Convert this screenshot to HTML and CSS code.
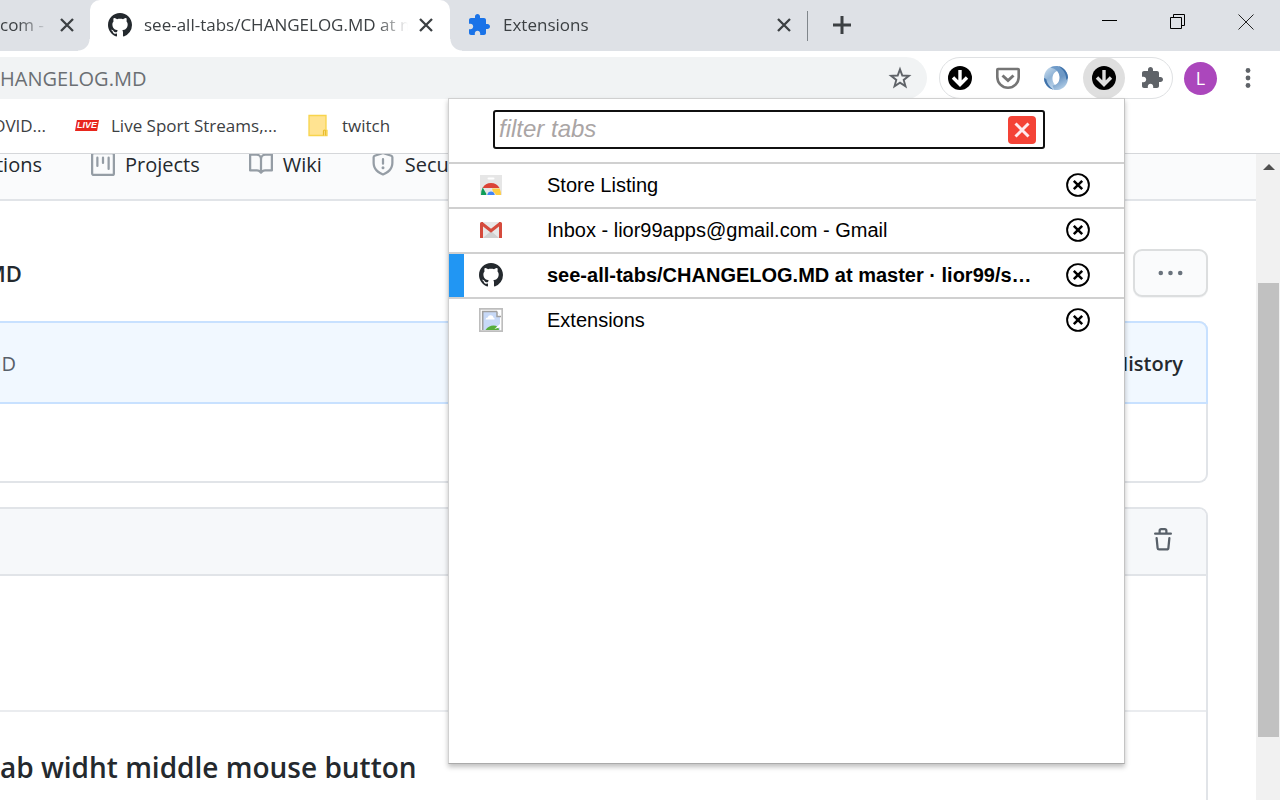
FILE: index.html
```html
<!DOCTYPE html>
<html lang="en">
<head>
<meta charset="utf-8">
<title>see-all-tabs/CHANGELOG.MD</title>
<link rel="stylesheet" href="styles.css">
</head>
<body>
<svg class="defs" aria-hidden="true">
  <symbol id="github" viewBox="0 0 16 16"><path d="M8 0C3.58 0 0 3.58 0 8c0 3.54 2.29 6.53 5.47 7.59.4.07.55-.17.55-.38 0-.19-.01-.82-.01-1.49-2.01.37-2.53-.49-2.69-.94-.09-.23-.48-.94-.82-1.13-.28-.15-.68-.52-.01-.53.63-.01 1.08.58 1.23.82.72 1.21 1.87.87 2.33.66.07-.52.28-.87.51-1.07-1.78-.2-3.64-.89-3.64-3.95 0-.87.31-1.59.82-2.15-.08-.2-.36-1.02.08-2.12 0 0 .67-.21 2.2.82.64-.18 1.32-.27 2-.27.68 0 1.36.09 2 .27 1.53-1.04 2.2-.82 2.2-.82.44 1.1.16 1.92.08 2.12.51.56.82 1.27.82 2.15 0 3.07-1.87 3.75-3.65 3.95.29.25.54.73.54 1.48 0 1.07-.01 1.93-.01 2.2 0 .21.15.46.55.38A8.013 8.013 0 0016 8c0-4.42-3.58-8-8-8z"/></symbol>
  <symbol id="puzzle" viewBox="0 0 24 24"><path d="M20.5 11H19V7c0-1.1-.9-2-2-2h-4V3.5C13 2.12 11.88 1 10.5 1S8 2.12 8 3.500V5H4c-1.100 0-1.990.9-1.990 2v3.800H3.500c1.490 0 2.700 1.210 2.700 2.700s-1.210 2.700-2.700 2.700H2V20c0 1.100.9 2 2 2h3.800v-1.500c0-1.490 1.210-2.700 2.700-2.700s2.700 1.210 2.700 2.700V22H17c1.100 0 2-.9 2-2v-4h1.500c1.380 0 2.500-1.120 2.500-2.500S21.880 11 20.500 11z"/></symbol>
  <symbol id="cross" viewBox="0 0 24 24"><path d="M6 6l12 12M18 6L6 18" stroke="currentColor" stroke-width="2.300" fill="none"/></symbol>
  <symbol id="down" viewBox="0 0 24 24"><circle cx="12" cy="12" r="12" fill="#000"/><path d="M12 4v14M5 11.500l7 7 7-7" stroke="currentColor" stroke-width="3.400" fill="none"/></symbol>
  <symbol id="round-x" viewBox="0 0 24 24"><circle cx="12" cy="12" r="10.900" fill="none" stroke="#000" stroke-width="1.900"/><path d="M7.800 7.800l8.400 8.400M16.200 7.800l-8.400 8.400" stroke="#000" stroke-width="2.500" fill="none"/></symbol>
</svg>

<header class="browser">
  <div class="strip">
    <div class="tab tab-first"><span class="tab-title">com - G</span><button class="tab-close" aria-label="Close tab"><svg><use href="#cross"/></svg></button></div>
    <div class="tab tab-active"><svg class="favicon mark"><use href="#github"/></svg><span class="tab-title">see-all-tabs/CHANGELOG.MD at master</span><button class="tab-close" aria-label="Close tab"><svg><use href="#cross"/></svg></button></div>
    <div class="tab tab-last"><svg class="favicon blue"><use href="#puzzle"/></svg><span class="tab-title">Extensions</span><button class="tab-close" aria-label="Close tab"><svg><use href="#cross"/></svg></button></div>
    <button class="new-tab" aria-label="New tab"><svg viewBox="0 0 24 24"><path d="M12 3v18M3 12h18" stroke="#3c4043" stroke-width="3" fill="none"/></svg></button>
    <div class="window-buttons">
      <button aria-label="Minimize"><svg viewBox="0 0 16 16"><path d="M0 6.500h15" stroke="#000" fill="none"/></svg></button>
      <button aria-label="Restore"><svg viewBox="0 0 16 16"><path d="M.5 3.500h11v11H.5zM3.500 3.500v-3h11v11h-3" stroke="#000" fill="none"/></svg></button>
      <button aria-label="Close"><svg viewBox="0 0 16 16"><path d="M.5.5l15 15M15.500.5l-15 15" stroke="#222" fill="none"/></svg></button>
    </div>
  </div>

  <div class="toolbar">
    <div class="omnibox"><span class="url">HANGELOG.MD</span>
      <button class="icon-button" aria-label="Bookmark this page"><svg viewBox="0 0 24 24"><path d="M12 3.300l2.300 6.200 6.600.3-5.200 4.100 1.800 6.400-5.500-3.700-5.500 3.700 1.800-6.400-5.200-4.100 6.600-.3z" fill="none" stroke="#5f6368" stroke-width="1.900"/></svg></button>
    </div>
    <div class="extensions">
      <button class="icon-button on-white" aria-label="See all tabs"><svg><use href="#down"/></svg></button>
      <button class="icon-button" aria-label="Pocket"><svg viewBox="0 0 24 24"><path d="M2 3h20a.7.7 0 01.7.7V11a10.700 10.700 0 01-21.400 0V3.700A.7.7 0 012 3z" fill="none" stroke="#757575" stroke-width="2.600"/><path d="M6.500 9.500l5.500 5 5.500-5" fill="none" stroke="#757575" stroke-width="3"/></svg></button>
      <button class="icon-button" aria-label="Swirl"><svg viewBox="0 0 24 24">
        <defs><linearGradient id="sw-left" x1="0" y1="0" x2=".6" y2="1"><stop offset="0" stop-color="#d3e3f1"/><stop offset=".5" stop-color="#8fb3d6"/><stop offset="1" stop-color="#c6dcf0"/></linearGradient><linearGradient id="sw-right" x1=".3" y1="0" x2=".7" y2="1"><stop offset="0" stop-color="#6e9ac8"/><stop offset=".5" stop-color="#6c97c4"/><stop offset="1" stop-color="#b9d3ea"/></linearGradient></defs>
        <path fill="url(#sw-left)" d="M14 .3C6.500-1.500 0 4.500 0 12c0 5.500 4 10.500 9.500 11.700 3 .3 6-.2 8.500-2.200-5 .5-9.500-3.500-9.500-9C8.500 8 11 5 15.500 4.500z"/>
        <path fill="url(#sw-right)" d="M10 23.700C17.500 25.500 24 19.500 24 12 24 6.500 20 1.500 14.500.3 11-.3 8.500.5 6.500 2 11 1.500 15.500 6 15.500 11.500c0 4.500-2.500 7.500-7 8z"/>
        <path fill="#3f72aa" d="M14.500.3C20 1.500 24 6.500 24 12l-1.800 2C22.500 8.500 19.500 3.500 14.500.3zM0 12c0 5.500 4 10.500 9.500 11.700C5.500 21 3 17.500 2.200 13z"/>
        <path fill="#fff" d="M12.500 6c2 1.500 3 3.500 2.500 6.500s-1.500 4.500-3.500 5.500C9.500 16 8.500 14 9 11.500s1.500-4 3.500-5.500z"/></svg></button>
      <button class="icon-button pressed" aria-label="See all tabs, open"><svg><use href="#down"/></svg></button>
      <button class="icon-button grey" aria-label="Extensions"><svg><use href="#puzzle"/></svg></button>
    </div>
    <button class="avatar">L</button>
    <button class="icon-button" aria-label="Menu"><svg viewBox="0 0 24 24" fill="#5f6368"><circle cx="12" cy="4.500" r="2.400"/><circle cx="12" cy="12" r="2.400"/><circle cx="12" cy="19.500" r="2.400"/></svg></button>
  </div>

  <nav class="bookmarks" aria-label="Bookmarks">
    <a href="#" class="bookmark cut">OVID...</a>
    <a href="#" class="bookmark live-link"><span class="live">LIVE</span>Live Sport Streams,...</a>
    <a href="#" class="bookmark folder-link"><svg class="folder" viewBox="0 0 20 24"><path d="M1 1.500h17v15h1v5H1z" fill="#ffe391" stroke="#f8d44c" stroke-width="1.300"/><path d="M15.500 21.500v-4.500q0-1 1-1t1 1v4.500" fill="#ffe391" stroke="#e9bd2e" stroke-width="1.200"/></svg>twitch</a>
  </nav>
</header>

<div class="viewport">
  <div class="page">
    <nav class="repo-nav" aria-label="Repository">
      <a href="#" class="cut">tions</a>
      <a href="#"><svg viewBox="0 0 16 16"><path fill-rule="evenodd" d="M1.750 0A1.750 1.750 0 000 1.750v12.500C0 15.216.784 16 1.750 16h12.500A1.750 1.750 0 0016 14.250V1.750A1.750 1.750 0 0014.250 0H1.750zM1.500 1.750a.25.25 0 01.25-.25h12.500a.25.25 0 01.25.25v12.500a.25.25 0 01-.25.25H1.750a.25.25 0 01-.25-.25V1.750zM11.750 3a.75.75 0 00-.75.75v7.500a.75.75 0 001.500 0v-7.500a.75.75 0 00-.75-.75zm-8.250.75a.75.75 0 011.500 0v5.500a.75.75 0 01-1.500 0v-5.500zM8 3a.75.75 0 00-.75.75v3.500a.75.75 0 001.500 0v-3.500A.75.75 0 008 3z"/></svg>Projects</a>
      <a href="#"><svg viewBox="0 0 16 16"><path fill-rule="evenodd" d="M0 1.750A.75.75 0 01.75 1h4.253c1.227 0 2.317.59 3 1.501A3.744 3.744 0 0111.006 1h4.245a.75.75 0 01.75.75v10.500a.75.75 0 01-.75.75h-4.507a2.250 2.250 0 00-1.591.659l-.622.621a.75.75 0 01-1.060 0l-.622-.621A2.250 2.250 0 005.258 13H.75a.75.75 0 01-.75-.75V1.750zm8.755 3a2.250 2.250 0 012.250-2.250H14.500v9h-3.757c-.71 0-1.400.201-1.992.572l.004-7.322zm-1.504 7.324l.004-5.073-.002-2.253A2.250 2.250 0 005.003 2.500H1.500v9h3.757a3.750 3.750 0 011.994.574z"/></svg>Wiki</a>
      <a href="#"><svg viewBox="0 0 16 16"><path fill-rule="evenodd" d="M7.467.133a1.750 1.750 0 011.066 0l5.250 1.680A1.750 1.750 0 0115 3.480V7c0 1.566-.32 3.182-1.303 4.682-.983 1.498-2.585 2.813-5.032 3.855a1.700 1.700 0 01-1.330 0c-2.447-1.042-4.049-2.357-5.032-3.855C1.320 10.182 1 8.566 1 7V3.480a1.750 1.750 0 011.217-1.667l5.250-1.680zm.61 1.429a.25.25 0 00-.153 0l-5.250 1.680a.25.25 0 00-.174.238V7c0 1.358.275 2.666 1.057 3.860.784 1.194 2.121 2.340 4.366 3.297a.2.2 0 00.154 0c2.245-.956 3.582-2.104 4.366-3.298C13.225 9.666 13.500 8.360 13.500 7V3.480a.25.25 0 00-.174-.237l-5.250-1.680zM9 10.500a1 1 0 11-2 0 1 1 0 012 0zm-.25-5.750a.75.75 0 10-1.500 0v3a.75.75 0 001.500 0v-3z"/></svg>Secu</a>
    </nav>
    <main class="content">
      <div class="path-row"><strong class="path">MD</strong><button class="more" aria-label="More options"><svg viewBox="0 0 24 24" fill="#6a737d"><circle cx="2.300" cy="12" r="2.300"/><circle cx="12" cy="12" r="2.300"/><circle cx="21.700" cy="12" r="2.300"/></svg></button></div>
      <section class="box commit">
        <div class="commit-head"><span class="crumb">MD</span><a href="#" class="history">History</a></div>
      </section>
      <section class="box file">
        <div class="file-head"><button class="trash" aria-label="Delete this file"><svg viewBox="0 0 16 16" fill="#586069"><path fill-rule="evenodd" d="M6.500 1.750a.25.25 0 01.25-.25h2.500a.25.25 0 01.25.25V3h-3V1.750zm4.500 0V3h2.250a.75.75 0 010 1.500H2.750a.75.75 0 010-1.500H5V1.750C5 .784 5.784 0 6.750 0h2.500C10.216 0 11 .784 11 1.750zM4.496 6.675a.75.75 0 10-1.492.15l.66 6.600A1.750 1.750 0 005.405 15h5.190c.9 0 1.652-.681 1.741-1.576l.66-6.600a.75.75 0 00-1.492-.149l-.66 6.600a.25.25 0 01-.249.225h-5.190a.25.25 0 01-.249-.225l-.66-6.600z"/></svg></button></div>
        <div class="readme"><h2>ab widht middle mouse button</h2></div>
      </section>
    </main>
  </div>
  <div class="scrollbar" aria-hidden="true"><svg class="arrow" viewBox="0 0 12 6"><path d="M6 0l6 6H0z" fill="#505050"/></svg><div class="thumb"></div></div>
</div>

<aside class="popup">
  <form class="filter">
    <div class="field"><input type="text" placeholder="filter tabs" aria-label="filter tabs"><button type="button" class="clear" aria-label="Clear filter"><svg viewBox="0 0 28 28"><rect width="28" height="28" rx="4" fill="#f44336"/><path d="M7.500 7.500l13 13M20.500 7.500l-13 13" stroke="#ffebee" stroke-width="3"/></svg></button></div>
  </form>
  <ul class="tabs">
    <li><svg class="icon" viewBox="0 0 24 24"><path fill="#e6e6e6" d="M1 2h22v20H1z"/><rect x="8.500" y="4.500" width="7" height="2" rx="1" fill="#fff"/><path fill="#db4437" d="M3.500 15a9.800 9.800 0 0117 0h-9z"/><path fill="#0f9d58" d="M3.700 14.500L8 22H2q-.2-4 1.700-7.500z"/><path fill="#ffcd40" d="M13 15.500h7.700Q22 18.500 22 22h-7z"/><path fill="#f1f1f1" d="M7.200 22a5 5 0 019.600 0z"/><path fill="#4285f4" d="M8.200 22a3.900 4.500 0 017.600 0z"/></svg><span>Store Listing</span><button class="remove" aria-label="Close Store Listing"><svg><use href="#round-x"/></svg></button></li>
    <li><svg class="icon" viewBox="0 0 24 24"><path fill="#e8e8e8" d="M3 4h18v16H3z"/><path fill="#d0d0d0" d="M4 20l8-7 8 7z"/><path fill="#d54b3d" d="M1 20V5.500Q1 4 2.500 4H4v16zM20 20V4h1.500Q23 4 23 5.500V20z"/><path fill="none" stroke="#d54b3d" stroke-width="3" d="M2.500 5.300l9.500 7.500 9.500-7.500"/></svg><span>Inbox - lior99apps@gmail.com - Gmail</span><button class="remove" aria-label="Close Gmail"><svg><use href="#round-x"/></svg></button></li>
    <li class="current"><svg class="icon mark"><use href="#github"/></svg><span>see-all-tabs/CHANGELOG.MD at master · lior99/see-all-tabs</span><button class="remove" aria-label="Close see-all-tabs"><svg><use href="#round-x"/></svg></button></li>
    <li><svg class="icon" viewBox="0 0 24 24"><path d="M.8.800h22.400v22.400H.8z" fill="#fff" stroke="#bdbdbd" stroke-width="1.700"/><path d="M3.700 3.500h14.300l3 3.500v15H3.700z" fill="#c7d9f7"/><path d="M3.700 22V3.500H18" fill="none" stroke="#a0a0a0" stroke-width="1.600"/><path d="M18 3.500V8.500h4" fill="#fff" stroke="#a0a0a0" stroke-width="1.500"/><path d="M6.500 11.500q.2-2 2.200-2Q9.500 6.800 12 7.300t2.300 2.200q1.700.2 1.200 2z" fill="#fff"/><path d="M6.500 22q3-4.500 8-4.500T20 22z" fill="#55ad3c"/><path d="M15.500 21l6.500-6v4z" fill="#fff"/></svg><span>Extensions</span><button class="remove" aria-label="Close Extensions"><svg><use href="#round-x"/></svg></button></li>
  </ul>
</aside>
</body>
</html>
```
FILE: styles.css
```css
* { box-sizing: border-box; }

body {
  margin: 0;
  height: 100vh;
  display: flex;
  flex-direction: column;
  position: relative;
  overflow: hidden;
  background: #fff;
  color: #24292e;
  font-family: "Open Sans", "Noto Sans", sans-serif;
  font-size: 17px;
}

button {
  display: flex;
  align-items: center;
  justify-content: center;
  padding: 0;
  border: 0;
  background: none;
  font: inherit;
  flex: none;
}

a { color: inherit; text-decoration: none; }
svg { display: block; flex: none; }
.defs { position: absolute; width: 0; height: 0; }
.mark { fill: #24292e; }
.blue { fill: #1a73e8; }
.grey { fill: #5f6368; }

/* Tab strip */
.browser { flex: none; }
.strip { display: flex; height: 51px; background: #dee1e6; color: #3c4043; }
.tab { display: flex; align-items: center; height: 50px; position: relative; }
.tab-title {
  flex: 1;
  min-width: 0;
  padding-bottom: 2px;
  overflow: hidden;
  white-space: nowrap;
  mask-image: linear-gradient(to left, transparent, #000 32px);
}
.tab-first { width: 90px; padding-right: 11px; }
.tab-first .tab-title { margin-right: 6px; }
.tab-active { width: 360px; height: 51px; padding: 0 12px 1px 18px; gap: 12px; background: #fff; border-radius: 10px 10px 0 0; }
.tab-active .tab-title { margin-right: -6px; }
.tab-active::before,
.tab-active::after { content: ""; position: absolute; bottom: 0; width: 12px; height: 12px; }
.tab-active::before { right: 100%; background: radial-gradient(circle at 0 0, transparent 11px, #fff 12px); }
.tab-active::after { left: 100%; background: radial-gradient(circle at 100% 0, transparent 11px, #fff 12px); }
.tab-last { width: 358px; padding: 0 12px 0 17px; gap: 12px; }
.tab-last::after { content: ""; position: absolute; right: 0; top: 11px; width: 1px; height: 30px; background: #80868b; }
.favicon { width: 24px; height: 24px; }
.tab-close svg { width: 24px; height: 24px; color: #3c4043; }
.new-tab { width: 68px; height: 50px; }
.new-tab svg { width: 24px; height: 24px; }
.window-buttons { display: flex; margin-left: auto; }
.window-buttons button { width: 68px; height: 43px; }
.window-buttons svg { width: 16px; height: 16px; }

/* Toolbar */
.toolbar { display: flex; align-items: center; padding: 6px 20px 0 0; }
.omnibox {
  flex: 1;
  display: flex;
  align-items: center;
  justify-content: space-between;
  height: 42px;
  padding-right: 15px;
  border-radius: 0 21px 21px 0;
  background: #f1f3f4;
}
.url { color: #6b6f73; font-size: 20px; }
.icon-button svg { width: 24px; height: 24px; }
.extensions { display: flex; gap: 24px; margin: 0 11px 0 12px; padding: 8px; border: 1px solid #dfe1e3; border-radius: 21px; }
.on-white { color: #fff; }
.pressed { color: #dfdfdf; background: #dfdfdf; border-radius: 50%; box-shadow: 0 0 0 9px #dfdfdf; }
.avatar { width: 33px; height: 33px; margin-right: 19px; border-radius: 50%; background: #ab47bc; color: #fff; font-size: 18px; }

/* Bookmarks */
.bookmarks { display: flex; align-items: center; height: 55px; padding-bottom: 1px; border-bottom: 1px solid #d5d7da; color: #3c4043; }
.bookmark { display: flex; align-items: center; white-space: nowrap; }
.cut { justify-content: flex-end; overflow: hidden; }
.bookmark.cut { width: 46px; }
.live-link { width: 232px; padding-left: 29px; gap: 12px; }
.live {
  width: 24px;
  height: 11px;
  background: #e8261c;
  clip-path: polygon(8% 0, 100% 0, 92% 100%, 0 100%);
  color: #fff;
  font: italic bold 9px/11px "Liberation Sans", sans-serif;
  text-align: center;
}
.folder-link { padding-left: 30px; gap: 14px; }
.folder { width: 20px; height: 24px; }

/* Page */
.viewport { flex: 1; min-height: 0; display: flex; }
.page { flex: 1; min-width: 0; overflow: hidden; }
.repo-nav { display: flex; gap: 49px; height: 47px; overflow: hidden; background: #fafbfc; border-bottom: 2px solid #e1e4e8; font-size: 20px; }
.repo-nav a { display: flex; align-items: center; gap: 10px; height: 24px; margin-top: -2px; }
.repo-nav .cut { width: 42px; overflow: visible; }
.repo-nav svg { width: 24px; height: 24px; fill: #959da5; }
.content { padding: 48px 48px 0 0; }
.path-row { display: flex; align-items: center; justify-content: space-between; height: 48px; }
.path, .crumb { display: flex; justify-content: flex-end; overflow: hidden; }
.path { width: 22px; font-size: 22px; font-weight: 600; }
.more { width: 75px; height: 48px; border: 2px solid #dcdedf; border-radius: 9px; background: #fafbfc; box-shadow: 0 1px 1px #f2f3f4; }
.more svg { width: 25px; height: 24px; }
.box { border: 2px solid #e1e4e8; border-left: 0; }
.commit { height: 162px; margin-top: 24px; border-radius: 0 9px 9px 0; }
.commit-head {
  display: flex;
  align-items: center;
  justify-content: space-between;
  height: 83px;
  margin: -2px -2px 0 0;
  padding: 2px 23px 0 0;
  background: #f1f8ff;
  border: 2px solid #c8e1ff;
  border-left: 0;
  border-radius: 0 9px 0 0;
}
.crumb { width: 16px; color: #586069; font-size: 20px; }
.history { font-size: 20px; font-weight: 600; }
.file { height: 320px; margin-top: 24px; border-radius: 0 9px 0 0; }
.file-head { display: flex; align-items: center; justify-content: flex-end; height: 67px; padding: 0 31px 3px 0; background: #f6f8fa; border-bottom: 2px solid #e1e4e8; border-radius: 0 7px 0 0; }
.trash svg { width: 24px; height: 24px; }
.readme { padding-top: 134px; }
.readme h2 { margin: 0; padding-top: 35px; border-top: 2px solid #eaecef; font-size: 28px; line-height: 40px; font-weight: 600; white-space: nowrap; }

/* Scrollbar */
.scrollbar { width: 24px; flex: none; padding: 10px 1px 0 2px; background: #f1f1f1; }
.arrow { width: 12px; height: 6px; margin: 0 auto; }
.thumb { height: 454px; margin-top: 113px; background: #c1c1c1; }

/* Extension popup */
.popup {
  position: absolute;
  top: 98px;
  right: 155px;
  width: 677px;
  height: 666px;
  border: 1px solid #d0d0d0;
  border-right-color: #c4c4c4;
  border-bottom-color: #aaa;
  background: #fff;
  box-shadow: 0 3px 5px rgba(0, 0, 0, .25);
  color: #000;
  font-family: "Liberation Sans", Arial, sans-serif;
  font-size: 20px;
}
.filter { padding: 11px 79px 13px 44px; }
.field { display: flex; align-items: center; height: 39px; padding: 1px 7px 0 0; border: 2px solid #101010; border-radius: 3px; }
.field input { flex: 1; min-width: 0; padding: 0 0 2px 4px; border: 0; outline: 0; background: none; font: italic 24px "Liberation Sans", Arial, sans-serif; }
.field input::placeholder { color: #aaa5a5; }
.clear svg { width: 28px; height: 28px; }
.tabs { margin: 0; padding: 0; list-style: none; }
.tabs li { display: flex; align-items: center; height: 45px; padding: 0 34px 1px 30px; border-top: 2px solid #d0d0d0; }
.tabs .current { font-weight: bold; background: linear-gradient(to right, #2196f3 15px, #fff 15px); }
.icon { width: 24px; height: 24px; margin-right: 44px; }
.tabs span { flex: 1; min-width: 0; margin-right: 24px; overflow: hidden; line-height: 24px; white-space: nowrap; text-overflow: ellipsis; }
.remove svg { width: 24px; height: 24px; }
```
